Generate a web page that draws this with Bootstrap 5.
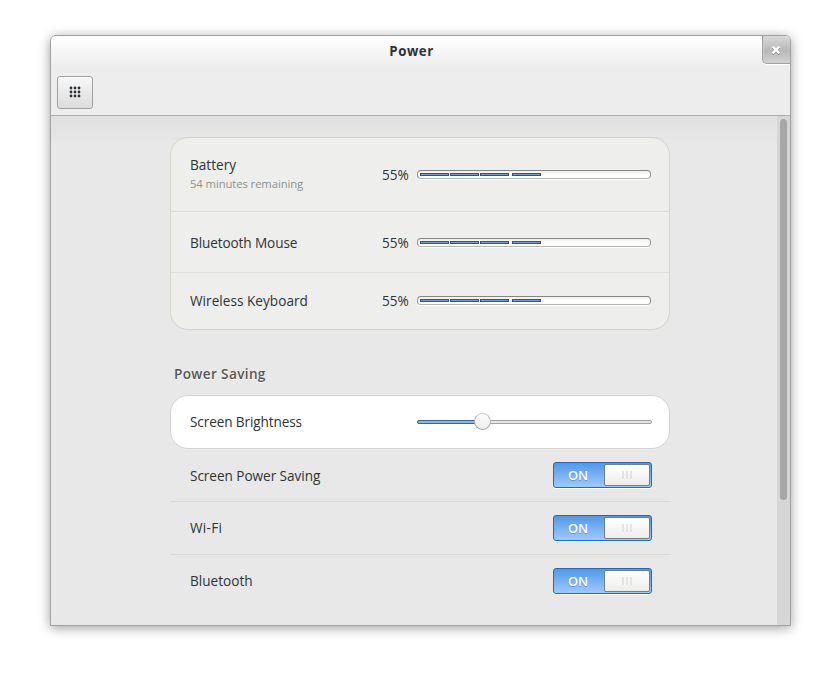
<!DOCTYPE html>
<html lang="en">
<head>
<meta charset="utf-8">
<title>Power</title>
<link href="https://cdn.jsdelivr.net/npm/bootstrap@5.3.0/dist/css/bootstrap.min.css" rel="stylesheet">
<style>
body{background:#fff;color:#2e3436;font:13.6px/20px "Open Sans","Noto Sans",sans-serif;height:700px;overflow:hidden;padding:35px 0 0 50px}
.window{width:741px;height:591px;border:1px solid #a1a1a1;border-radius:6px 6px 0 0;background:#e8e8e8;box-shadow:0 2px 12px rgba(0,0,0,.38);overflow:hidden}
.titlebar{height:80px;background:linear-gradient(#fff 0,#ededed 31px);border-bottom:1px solid #adadad}
.title-text{font-weight:700;font-size:13.3px;line-height:31px;letter-spacing:.5px;margin-left:-42px;padding-right:18px}
.close-btn{width:28px;height:28px;top:0;right:0;border:solid #a1a1a1;border-width:0 0 1px 1px;border-radius:0 0 0 5px;background:linear-gradient(#d8d8d8,#b9b9b9 55%,#d2d2d2);box-shadow:0 1px #fff,inset 1px 0 #ccc}
.close-btn svg{margin:1px 2px 0 0}
.grid-btn{width:36px;height:33px;margin:40px 0 0 6px;border:1px solid #a1a1a1;border-radius:3px;background:linear-gradient(#f8f8f8,#dcdcdc);box-shadow:inset 0 1px #fff}
.view{height:509px;background:linear-gradient(#e0e0e0,#e8e8e8 30px)}
.scroller{width:13px;background:#d6d6d6;padding:3px}
.thumb{width:7px;height:381px;border-radius:4px;background:#a5a8a6}
.content-col{width:501px;margin:21px 0 0 119px}
.panel{width:500px;border:1px solid #d3d3cf;border-radius:18px;background:#eeeeec}
.item{padding:0 18px 0 19px}
.panel .item+.item{border-top:1px solid #dededc}
.r1{height:73px}.r2{height:61px}.r3{height:57px}
.r1>div:first-child{padding-bottom:2px}
.r2 .name,.r2 .pct{padding-top:2px}
.r3 .level{margin-bottom:1px}
.n2{letter-spacing:-.11px}.n3{letter-spacing:.03px}.n4{letter-spacing:-.12px}.n6{letter-spacing:.3px}
.n5{letter-spacing:-.05px}
.sub{font-size:11.3px;line-height:18px;letter-spacing:-.1px;color:#8f9290}
.pct{width:35px}
.level{width:234px;height:9px;border:1px solid #92958f;border-top-color:#858583;border-bottom-color:#b3b6ae;border-radius:4px;background:linear-gradient(#eee,#fff 60%);box-shadow:0 1px #fff;padding:2px;gap:1px}
.seg{width:29px;height:3px;border:1px solid #2a5591;background:#729fcf}
.seg:last-child{margin-left:2px}
.heading{font-weight:600;color:#555753;font-size:13.6px;letter-spacing:.35px;margin:34px 0 11px 4px;height:20px;text-shadow:0 1px #fff}
.bright{background:#fff;height:54px;padding-right:17px}
.track{width:235px;height:4px;border:1px solid #a3a3a3;border-radius:2px;background:#e4e4e4}
.fill{width:65px;height:4px;margin:-1px;border:1px solid #3465a4;border-radius:2px;background:#8fb7e6}
.knob{width:17px;height:17px;left:56px;top:-8px;border:1px solid #b2b2b2;border-color:#ccc #b2b2b2 #a0a0a0;border-radius:50%;background:linear-gradient(#fff,#ececec)}
.opt{height:52px;padding-left:20px;padding-right:19px}
.opt+.opt{border-top:1px solid #d9d9d9;height:53px}
.opt:first-child .name{padding-top:2px}
.toggle{width:99px;height:26px;border:1px solid #1b6acb;border-radius:3px;background:linear-gradient(#5098e6,#a0caff);box-shadow:0 1px #fff;padding:1px}
.on{width:46px;color:#fff;font-size:12.8px;font-weight:600;text-shadow:0 1px #5e9add}
.handle{width:46px;height:22px;border:1px solid #7c7c7a;border-radius:2px;background:linear-gradient(#fff,#ededec);gap:2px}
.handle i{width:2px;height:8px;background:#e4e4e3}
</style>
<script src="https://cdn.jsdelivr.net/npm/bootstrap@5.3.0/dist/js/bootstrap.bundle.min.js"></script>
</head>
<body>
<main class="window">
  <header class="titlebar position-relative d-flex">
    <button class="grid-btn d-flex align-items-center justify-content-center p-0 pb-1" aria-label="All settings">
      <svg class="mt-1" width="12" height="13" fill="#2e3436"><g id="dots"><circle cx="2" cy="2" r="1.4"/><circle cx="6" cy="2" r="1.4"/><circle cx="10" cy="2" r="1.4"/></g><use href="#dots" y="4"/><use href="#dots" y="8"/></svg>
    </button>
    <div class="title-text text-center flex-fill">Power</div>
    <button class="close-btn position-absolute d-flex align-items-center justify-content-center p-0" aria-label="Close">
      <svg width="10" height="11" fill="none" stroke-width="2.4"><path d="M1.5 1.5 8.5 8.5M8.5 1.5 1.5 8.5" stroke="#888" transform="translate(0 1)"/><path d="M1.5 1.5 8.5 8.5M8.5 1.5 1.5 8.5" stroke="#fff"/></svg>
    </button>
  </header>
  <div class="view d-flex justify-content-between">
    <div class="content-col">
      <section class="panel">
        <div class="item r1 d-flex align-items-center">
          <div class="me-auto"><div class="name">Battery</div><div class="sub">54 minutes remaining</div></div>
          <div class="pct">55%</div>
          <div class="level d-flex"><div class="seg"></div><div class="seg"></div><div class="seg"></div><div class="seg"></div></div>
        </div>
        <div class="item r2 d-flex align-items-center">
          <div class="me-auto name n2">Bluetooth Mouse</div>
          <div class="pct">55%</div>
          <div class="level d-flex"><div class="seg"></div><div class="seg"></div><div class="seg"></div><div class="seg"></div></div>
        </div>
        <div class="item r3 d-flex align-items-center">
          <div class="me-auto name n3">Wireless Keyboard</div>
          <div class="pct">55%</div>
          <div class="level d-flex"><div class="seg"></div><div class="seg"></div><div class="seg"></div><div class="seg"></div></div>
        </div>
      </section>
      <h2 class="heading lh-base">Power Saving</h2>
      <section class="panel bright item d-flex align-items-center justify-content-between">
        <div class="name n4">Screen Brightness</div>
        <div class="track position-relative"><div class="fill"></div><div class="knob position-absolute"></div></div>
      </section>
      <section>
        <div class="opt d-flex align-items-center justify-content-between"><div class="name n5">Screen Power Saving</div>
          <div class="toggle d-flex justify-content-between align-items-center"><span class="on text-center">ON</span><span class="handle d-flex align-items-center justify-content-center"><i></i><i></i><i></i></span></div></div>
        <div class="opt d-flex align-items-center justify-content-between"><div class="name n6">Wi-Fi</div>
          <div class="toggle d-flex justify-content-between align-items-center"><span class="on text-center">ON</span><span class="handle d-flex align-items-center justify-content-center"><i></i><i></i><i></i></span></div></div>
        <div class="opt d-flex align-items-center justify-content-between"><div class="name">Bluetooth</div>
          <div class="toggle d-flex justify-content-between align-items-center"><span class="on text-center">ON</span><span class="handle d-flex align-items-center justify-content-center"><i></i><i></i><i></i></span></div></div>
      </section>
    </div>
    <div class="scroller"><div class="thumb"></div></div>
  </div>
</main>
</body>
</html>
